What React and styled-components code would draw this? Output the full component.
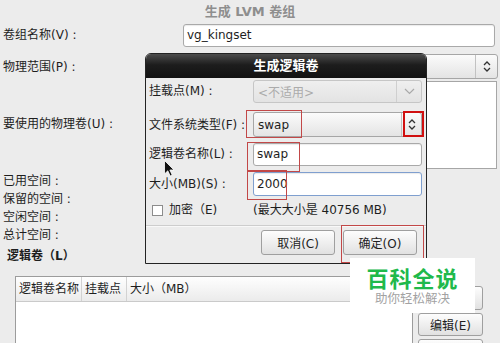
import React from 'react';
import styled, { createGlobalStyle, css } from 'styled-components';

const GlobalStyle = createGlobalStyle`
html, body {
  margin: 0;
  padding: 0;
  background: #ececec;
}
body {
  font-family: "DejaVu Sans", "Noto Sans CJK SC", sans-serif;
  font-size: 12px;
  color: #1e1e1e;
}
`

const Page = styled.div`
position: relative;
width: 500px;
height: 343px;
overflow: hidden;
display: flex;
flex-direction: column;
background: #ececec;
`

const Title = styled.div`
height: 24px;
line-height: 24px;
text-align: center;
font-size: 13px;
font-weight: bold;
color: #8e8e8e;
`

const FormGrid = styled.div`
display: grid;
grid-template-columns: 180px 1fr;
grid-template-rows: 23px 32px 90px;
align-items: end;
padding: 0 2px 0 3px;
`

const Label = styled.div`
line-height: 24px;
white-space: nowrap;
align-self: ${p => (p.$center ? 'center' : 'end')};
`

const TextInput = styled.div`
box-sizing: border-box;
height: ${p => p.$h || 23}px;
line-height: ${p => (p.$h || 23) - 2}px;
padding-left: 3px;
margin-right: ${p => p.$mr || 0}px;
background: #fff;
border: 1px solid ${p => (p.$focus ? '#7f9fcf' : '#a9a9a9')};
border-radius: 3px;
box-shadow: inset 0 1px 1px rgba(0, 0, 0, 0.08);
white-space: nowrap;
overflow: hidden;
`

const Combo = styled.div`
box-sizing: border-box;
height: ${p => p.$h || 25}px;
display: flex;
align-items: stretch;
border-radius: 3px;
border: 1px solid #a6a6a6;
background: linear-gradient(#fbfbfb, #e4e4e4);
${p => p.$disabled && css`
  border-color: #c6c6c6;
  background: linear-gradient(#efefef, #e3e3e3);
  color: #ababab;
`}
`

const ComboText = styled.div`
flex: 1;
padding-left: 4px;
display: flex;
align-items: center;
white-space: nowrap;
`

const ComboArrow = styled.div`
width: ${p => p.$w || 20}px;
border-left: 1px solid ${p => (p.$disabled ? '#cfcfcf' : '#c2c2c2')};
display: flex;
align-items: center;
justify-content: center;
`

const ListBox = styled.div`
box-sizing: border-box;
height: 88px;
margin-right: 1px;
background: #fff;
border: 1px solid #a6a6a6;
`

const SpaceList = styled.div`
margin-top: 3px;
padding-left: 3px;
line-height: 18px;
`

const SectionTitle = styled.div`
margin-top: 2px;
padding-left: 7px;
line-height: 20px;
font-weight: bold;
`

const BottomRow = styled.div`
flex: 1;
display: flex;
align-items: stretch;
margin-top: 10px;
padding-left: 15px;
`

const Table = styled.div`
box-sizing: border-box;
width: 398px;
background: #fff;
border: 1px solid #9c9c9c;
border-bottom: none;
`

const TableHead = styled.div`
display: grid;
grid-template-columns: 66px 45px 1fr;
height: 24px;
background: linear-gradient(#fefefe, #ebebeb);
border-bottom: 1px solid #cacaca;
`

const HeadCell = styled.div`
padding-left: 3px;
line-height: 24px;
white-space: nowrap;
border-right: ${p => (p.$last ? 'none' : '1px solid #d2d2d2')};
`

const ButtonCol = styled.div`
display: flex;
flex-direction: column;
gap: 3px;
width: 65px;
margin-left: 5px;
padding-top: 10px;
`

const Button = styled.div`
box-sizing: border-box;
flex-shrink: 0;
width: ${p => p.$w || 65}px;
height: ${p => p.$h || 24}px;
display: flex;
align-items: center;
justify-content: center;
border: 1px solid #9f9f9f;
border-radius: 3px;
background: linear-gradient(#fdfdfd, #e1e1e1);
white-space: nowrap;
`

const Dialog = styled.div`
position: absolute;
left: 145px;
top: 53px;
width: 282px;
height: 211px;
box-sizing: border-box;
border: 1px solid #232323;
border-radius: 6px 6px 0 0;
background: #ececec;
display: flex;
flex-direction: column;
`

const DialogTitle = styled.div`
height: 24px;
line-height: 24px;
text-align: center;
color: #fff;
font-size: 13px;
font-weight: bold;
border-radius: 5px 5px 0 0;
background: linear-gradient(#4c4c4c, #1d1d1d 45%, #121212);
`

const DialogGrid = styled.div`
display: grid;
grid-template-columns: 104px 169px;
grid-template-rows: 25px 34px 29px 30px;
align-items: end;
padding: 0 4px 0 3px;
`

const OptionRow = styled.div`
display: grid;
grid-template-columns: 104px 169px;
margin-top: 4px;
padding: 0 4px 0 3px;
line-height: 20px;
white-space: nowrap;
`

const CheckLabel = styled.div`
display: flex;
align-items: center;
gap: 6px;
padding-left: 3px;
`

const CheckBox = styled.span`
box-sizing: border-box;
width: 11px;
height: 11px;
background: #fff;
border: 1px solid #8c8c8c;
`

const Separator = styled.div`
margin-top: 5px;
height: 1px;
background: #cdcdcd;
border-bottom: 1px solid #f8f8f8;
`

const ButtonRow = styled.div`
display: flex;
justify-content: flex-end;
gap: 8px;
margin-top: 3px;
padding-right: 9px;
`

const Mark = styled.div`
position: absolute;
box-sizing: border-box;
left: ${p => p.$x}px;
top: ${p => p.$y}px;
width: ${p => p.$w}px;
height: ${p => p.$h}px;
border: ${p => (p.$thick ? '2px solid #d00f0f' : '1px solid #c24848')};
`

const Watermark = styled.div`
position: absolute;
left: 350px;
top: 258px;
width: 125px;
height: 55px;
background: #fff;
display: flex;
flex-direction: column;
align-items: center;
justify-content: center;
`

const WmBig = styled.div`
color: #20b94b;
font-family: "Noto Sans CJK SC", sans-serif;
font-size: 22px;
font-weight: bold;
line-height: 24px;
letter-spacing: 1px;
`

const WmSmall = styled.div`
color: #a2a2a2;
font-family: "Noto Sans CJK SC", sans-serif;
font-size: 12.5px;
line-height: 18px;
`

const Cursor = styled.svg`
position: absolute;
left: 164px;
top: 160px;
`

const Spin = () => (
  <svg width="8" height="13" viewBox="0 0 8 13">
    <path d="M1 5 L4 2 L7 5 M1 8 L4 11 L7 8" fill="none" stroke="#333" strokeWidth="1.3" />
  </svg>
);

const Chevron = () => (
  <svg width="11" height="7" viewBox="0 0 11 7">
    <path d="M1 1 L5.5 5.5 L10 1" fill="none" stroke="#a9a9a9" strokeWidth="1.2" />
  </svg>
);

export const App = () => {
  return (
    <Page>
      <GlobalStyle />
      <Title>生成 LVM 卷组</Title>
      <FormGrid>
        <Label>卷组名称(V) :</Label>
        <TextInput $mr={3}>vg_kingset</TextInput>
        <Label>物理范围(P) :</Label>
        <Combo>
          <ComboText></ComboText>
          <ComboArrow $w={21}><Spin /></ComboArrow>
        </Combo>
        <Label $center>要使用的物理卷(U) :</Label>
        <ListBox />
      </FormGrid>
      <SpaceList>
        <div>已用空间 :</div>
        <div>保留的空间 :</div>
        <div>空闲空间 :</div>
        <div>总计空间 :</div>
      </SpaceList>
      <SectionTitle>逻辑卷（L）</SectionTitle>
      <BottomRow>
        <Table>
          <TableHead>
            <HeadCell>逻辑卷名称</HeadCell>
            <HeadCell>挂载点</HeadCell>
            <HeadCell $last>大小（MB）</HeadCell>
          </TableHead>
        </Table>
        <ButtonCol>
          {/* covered by the watermark / cut off at the bottom edge */}
          <Button />
          <Button $h={23}>编辑(E)</Button>
          <Button />
        </ButtonCol>
      </BottomRow>

      <Dialog>
        <DialogTitle>生成逻辑卷</DialogTitle>
        <DialogGrid>
          <Label>挂载点(M) :</Label>
          <Combo $disabled $h={23}>
            <ComboText>&lt;不适用&gt;</ComboText>
            <ComboArrow $w={24} $disabled><Chevron /></ComboArrow>
          </Combo>
          <Label>文件系统类型(F) :</Label>
          <Combo>
            <ComboText>swap</ComboText>
            <ComboArrow $w={19}><Spin /></ComboArrow>
          </Combo>
          <Label>逻辑卷名称(L) :</Label>
          <TextInput>swap</TextInput>
          <Label>大小(MB)(S) :</Label>
          <TextInput $h={24} $focus>2000</TextInput>
        </DialogGrid>
        <OptionRow>
          <CheckLabel><CheckBox />加密（E)</CheckLabel>
          <div>(最大大小是 40756 MB)</div>
        </OptionRow>
        <Separator />
        <ButtonRow>
          <Button $w={74} $h={25}>取消(C)</Button>
          <Button $w={74} $h={25}>确定(O)</Button>
        </ButtonRow>
        <Mark $x={100} $y={56} $w={56} $h={28} />
        <Mark $x={257} $y={57} $w={21} $h={26} $thick />
        <Mark $x={101} $y={88} $w={53} $h={30} />
        <Mark $x={101} $y={116} $w={40} $h={30} />
        <Mark $x={195} $y={171} $w={83} $h={38} />
      </Dialog>

      <Watermark>
        <WmBig>百科全说</WmBig>
        <WmSmall>助你轻松解决</WmSmall>
      </Watermark>

      <Cursor width="11" height="17" viewBox="0 0 11 17">
        <path d="M0.5 0.5 L0.5 14 L3.8 10.8 L6.2 16 L8.2 15.1 L5.9 10 L10 10 Z" fill="#111" stroke="#fff" strokeWidth="0.8" />
      </Cursor>
    </Page>
  );
};

export default App;
